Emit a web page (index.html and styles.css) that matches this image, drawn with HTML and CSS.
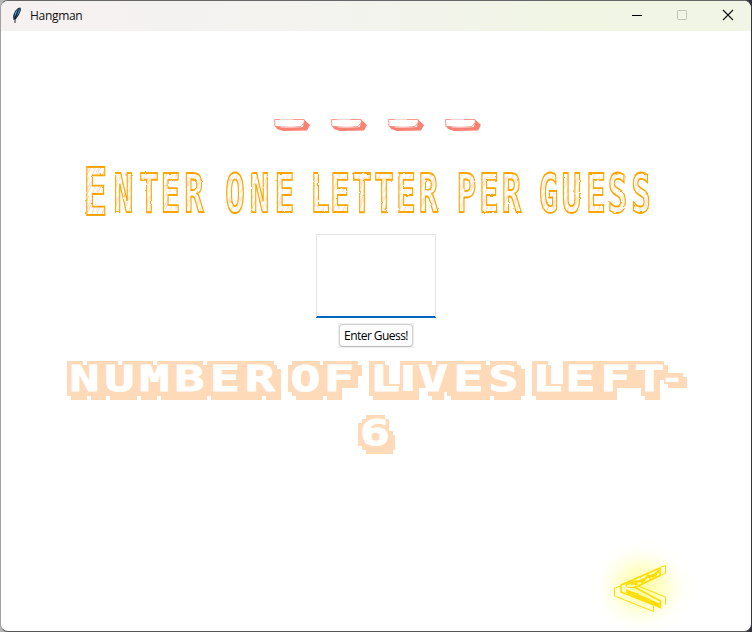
FILE: index.html
```html
<!DOCTYPE html>
<html lang="en">
<head>
<meta charset="utf-8">
<title>Hangman</title>
<link rel="stylesheet" href="styles.css">
</head>
<body>
<div class="window">
  <header class="titlebar">
    <svg class="feather" width="12" height="18" viewBox="0 0 12 18"><path d="M2.500 14L2 10 4 5 7 2 9.500 1.500 10 4 8 9 5 13Z" fill="#26364a"/><path d="M3.500 11L4.500 6 7 3 6 8Z" fill="#5aaaf5"/><path d="M6 10L8 3 9 4 7.500 8Z" fill="#3f85d0"/><path d="M7 4L4 12V17" stroke="#111" stroke-width=".9" fill="none"/></svg>
    <span class="caption">Hangman</span>
    <svg class="controls" width="106" height="12" viewBox="0 0 106 12" fill="none"><path d="M1 6.500H11" stroke="#000"/><rect x="46.500" y="1.500" width="9" height="9" rx=".8" stroke="#bfc4b4"/><path d="M92 1L102 11M102 1L92 11" stroke="#111" stroke-width="1.100"/></svg>
  </header>
  <main class="game">
    <svg class="blanks" width="212" height="16" viewBox="272 117 212 16">
      <defs><g id="blank"><path d="M274 124L277 129 283 131 307 130.500 310 125 304 119.500 303 127 291 128 279 127Z" fill="#fa8072"/><path d="M274.500 119.500L304 119.500 304.500 122 301 126.500 289 127.500 279 126.500 275 126.500Z" fill="#fff" stroke="#fa8072" stroke-width=".8"/><path d="M280 119.500H293M281 127H292" stroke="#ffd5d0" stroke-width="1"/></g></defs>
      <use href="#blank"/><use href="#blank" x="57"/><use href="#blank" x="114"/><use href="#blank" x="171"/>
    </svg>
    <svg class="prompt" width="580" height="60" viewBox="80 162 580 60">
      <defs>
        <pattern id="hatch" width="17" height="19" patternUnits="userSpaceOnUse"><rect width="17" height="19" fill="#fff"/><path d="M-1 9L7 -1M3 17L14 3M10 19L17 9" stroke="#ffb94d" stroke-width=".7"/><path d="M1 15L10 4" stroke="#ffd5dc" stroke-width="1.200"/></pattern>
        <filter id="rough" x="-2%" y="-10%" width="104%" height="120%"><feTurbulence type="fractalNoise" baseFrequency=".18" numOctaves="2" seed="4"/><feDisplacementMap in="SourceGraphic" scale="2" xChannelSelector="R" yChannelSelector="G"/></filter>
      </defs>
      <g class="sketch" filter="url(#rough)">
        <text class="initial" transform="translate(95.500 215) scale(.6 1)">E</text>
        <g transform="translate(0 211.500) scale(.6 1)">
          <text x="205.800 248.300 284.200 323.300">NTER</text>
          <text x="391.700 432.500 474.200">ONE</text>
          <text x="533.300 566.700 603.300 640 676.700 714.200">LETTER</text>
          <text x="777.500 815 852.500">PER</text>
          <text x="914.200 952.500 993.300 1029.200 1068.300">GUESS</text>
        </g>
      </g>
    </svg>
    <input class="guess" aria-label="Guess">
    <div class="button-frame"><button>Enter Guess!</button></div>
    <svg class="lives" width="632" height="104" viewBox="60 356 632 104">
      <g class="plate" shape-rendering="crispEdges">
        <path d="M67 361H82.500V365H86.500V361H117.500V365H121.500V361H152.500V365H156.500V361H203V365H207V361H273.500V365H277V368.500H281V400H265.500V396H261.500V400H211V396H207V400H160.500V396H156.500V400H141V396H137V400H109.500V396H105.500V400H90.500V396H86.500V400H71V396H67Z"/>
        <path d="M292 361H320V365H323V361H358V365H361.700V376H358V388H342.300V400H326.700V396H323V400H295.700V396H292V392H288V365H292Z"/>
        <path d="M369 361H385V365H389V384H400V361H432V365H436V361H486V365H490V361H517V365H520.700V369H524.700V396H520.700V400H494V396H490V400H451V396H447V392H443.500V400H431.700V396H427.700V388H419.300V400H373V396H369Z"/>
        <path d="M532 361H547.700V365H551.300V384H563V361H664V365H668V372.700H683.300V376.700H687V388H668V384H664V380H660.300V400H644.700V396H641V388H617.300V400H536V396H532Z"/>
        <path d="M365.700 415H385V419H389V430.700H392.700V434.700H395V450H392.700V453.700H365.700V450H361.700V446H358V423H361.700V419H365.700Z"/>
      </g>
      <g class="pixel" transform="translate(0 391) scale(1.38 1)">
        <text x="61.200 86.600 112 137.300 163 188.400">NUMBER</text>
        <text x="221.400 245.700">OF</text>
        <text x="279">L</text><text class="bar" x="295.700">I</text>
        <text x="313.800 339.500 364.900">VES</text>
        <text x="396.700 420.700 446 470.700">LEFT</text><text class="dash" x="487" y="-2">-</text>
        <text x="271.700" y="54.300">6</text>
      </g>
    </svg>
    <svg class="back" width="140" height="100" viewBox="570 532 140 100">
      <defs><radialGradient id="glow"><stop stop-color="#ffffa6"/><stop offset=".35" stop-color="#ffffc4"/><stop offset=".62" stop-color="#ffffea"/><stop offset=".82" stop-color="#fffffb"/><stop offset="1" stop-color="#fff"/></radialGradient></defs>
      <ellipse cx="642" cy="587" rx="53" ry="47" fill="url(#glow)"/>
      <g fill="none" stroke="#ffdc00"><path d="M661 567L665.500 565.500V573L638 586 665.500 597V604.500M621 586L614.500 588V596L653.500 611.500V606" stroke-width="1"/><path d="M621 585L660 568V575.500L635 587.500 660.500 601V607.500L621 592Z" stroke-width="1.600"/><path d="M626 585L635 581 643 582 648 575 653 577 659 570M627 591L638 594 639 598 649 599 652 603 660 604M635 583L659 572M626 590L659 604M626 592L659 606M631 584H638M642 580V584M650 576V580M656 572V577" stroke-width="1.500"/><ellipse cx="631" cy="585" rx="5" ry="2.500"/></g>
    </svg>
  </main>
</div>
</body>
</html>
```

FILE: styles.css
```css
* { box-sizing: border-box; }
body { margin: 0; width: 752px; height: 632px; overflow: hidden; background: linear-gradient(90deg, #b5b5b5 0 55%, #303338 55%); }
.window { width: 752px; height: 632px; border: 1px solid #999; border-color: #666 #35353b #555 #a0a0a0; border-radius: 8px; overflow: hidden; background: #fff; }
.titlebar { height: 30px; display: flex; align-items: center; padding-left: 10px; background: linear-gradient(90deg, #f5f1f1, #f3f3ef 45%, #f0f5e4 75%, #f1f5e5); }
.caption { margin-left: 7px; font: 12px "Open Sans", "Noto Sans", sans-serif; color: #111; letter-spacing: -.3px; }
.controls { margin-left: auto; margin-right: 14px; }
.feather, .caption, .controls { margin-bottom: 2px; }
.game { height: 600px; display: flex; flex-direction: column; align-items: center; }
.game svg { display: block; flex: none; overflow: visible; }
.blanks { margin-top: 86px; margin-left: 4px; }
.prompt { margin-top: 29px; margin-right: 12px; }
.sketch { font: bold 54px "DejaVu Sans Mono", monospace; text-anchor: middle; fill: url(#hatch); stroke: #ffa500; stroke-width: 1.8px; }
.initial { font-size: 66px; }
.guess { width: 120px; height: 84px; flex: none; margin-top: 12px; padding: 8px; border: 1px solid #e5e5e5; border-bottom: 2px solid #0067c0; outline: none; background: #fff; }
.button-frame { flex: none; width: 76px; height: 25px; margin-top: 5px; padding: 1px; background: #f0f0f0; }
.button-frame button { width: 74px; height: 23px; padding: 0; border: 1px solid #d0d0d0; border-bottom-color: #bbb; border-radius: 4px; background: #fdfdfd; color: #000; font: 12px "Open Sans", "Noto Sans", sans-serif; letter-spacing: -.55px; white-space: nowrap; }
.lives { margin-top: 8px; }
.plate { fill: #ffdab9; }
.pixel { font: bold 36px "DejaVu Sans Mono", monospace; text-anchor: middle; fill: #fff; stroke: #fff; stroke-width: 1px; stroke-linejoin: miter; }
.bar { font-family: "DejaVu Sans", sans-serif; stroke: none; }
.dash { font-size: 30px; stroke: none; }
.back { margin-top: 72px; align-self: flex-end; margin-right: 41px; }
```
